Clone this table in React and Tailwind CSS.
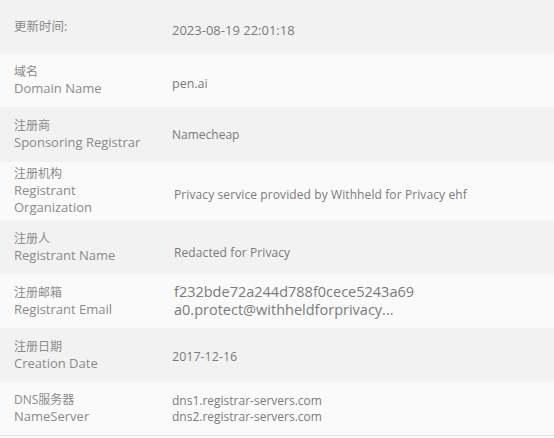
import React from 'react';

const rows = [
  { zh: '更新时间:', en: [], value: ['2023-08-19 22:01:18'], h: 'h-[54px]', vc: 'text-[13px] pt-2' },
  { zh: '域名', en: ['Domain Name'], value: ['pen.ai'], h: 'h-[53px]', vc: 'text-[12.5px] pt-2' },
  { zh: '注册商', en: ['Sponsoring Registrar'], value: ['Namecheap'], h: 'h-[55px]', vc: 'text-[12px]' },
  { zh: '注册机构', en: ['Registrant', 'Organization'], value: ['Privacy service provided by Withheld for Privacy ehf'], h: 'h-[58px]', vc: 'text-[12px] tracking-[0.1px] pl-[2px] pt-2' },
  { zh: '注册人', en: ['Registrant Name'], value: ['Redacted for Privacy'], h: 'h-[54px]', vc: 'text-[12px] tracking-[0.1px] pl-[2px] pt-3' },
  { zh: '注册邮箱', en: ['Registrant Email'], value: ['f232bde72a244d788f0cece5243a69', 'a0.protect@withheldforprivacy...'], h: 'h-[54px]', vc: 'text-[14.5px] leading-[18px] pl-[2px]' },
  { zh: '注册日期', en: ['Creation Date'], value: ['2017-12-16'], h: 'h-[54px]', vc: 'text-[12.5px] pt-1' },
  { zh: 'DNS服务器', en: ['NameServer'], value: ['dns1.registrar-servers.com', 'dns2.registrar-servers.com'], h: 'h-[53px]', vc: 'text-[12px] leading-[16px]' },
];

export default function App() {
  return (
    <div
      className="w-[554px] h-[438px] bg-white overflow-hidden"
      style={{ fontFamily: '"Open Sans", "Noto Sans CJK SC", sans-serif' }}
    >
      <div className="border-b border-[#e6e6e6]">
        {rows.map((r, i) => (
          <div
            key={i}
            className={`flex items-center ${r.h} ${i % 2 === 0 ? 'bg-[#f2f2f2]' : 'bg-[#fafafa]'}`}
          >
            <div className="w-[172px] shrink-0 pl-[14px] text-[#8a8a8a]">
              <div className={r.en.length ? 'text-[12px] leading-[16px]' : 'text-[12.5px]'}>{r.zh}</div>
              {r.en.map((t) => (
                <div key={t} className="text-[13px] leading-[17px]">{t}</div>
              ))}
            </div>
            <div className={`text-[#7a7a7a] ${r.vc}`}>
              {r.value.map((t) => (
                <div key={t}>{t}</div>
              ))}
            </div>
          </div>
        ))}
      </div>
    </div>
  );
}
